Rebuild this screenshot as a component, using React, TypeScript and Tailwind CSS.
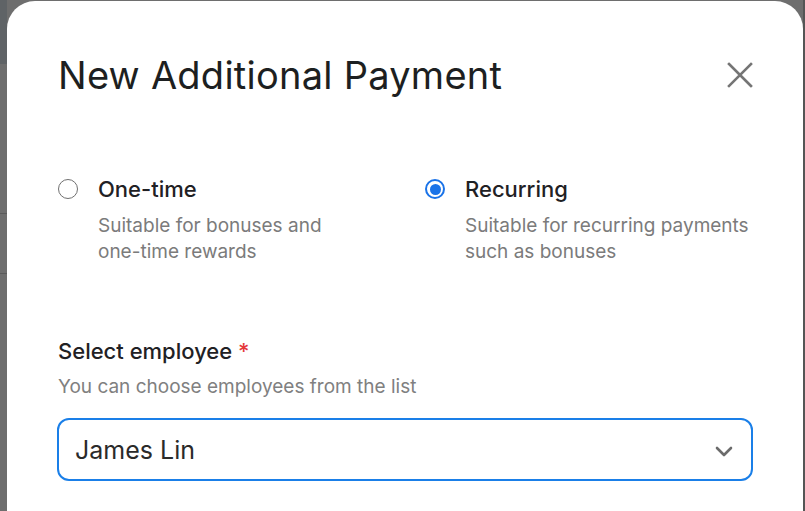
import { useState } from 'react';

type Option = {
  id: string;
  label: string;
  lines: string[];
};

const OPTIONS: Option[] = [
  { id: 'one-time', label: 'One-time', lines: ['Suitable for bonuses and', 'one-time rewards'] },
  { id: 'recurring', label: 'Recurring', lines: ['Suitable for recurring payments', 'such as bonuses'] },
];

function Radio({ checked }: { checked: boolean }) {
  return checked ? (
    <div className="w-[20px] h-[20px] rounded-full border-[2px] border-[#1a73e8] flex items-center justify-center shrink-0">
      <div className="w-[11px] h-[11px] rounded-full bg-[#1a73e8]" />
    </div>
  ) : (
    <div className="w-[20px] h-[20px] rounded-full border-[1.5px] border-[#707070] shrink-0" />
  );
}

export default function App() {
  const [type, setType] = useState('recurring');

  return (
    <div
      className="w-[805px] h-[511px] overflow-hidden bg-[#6e6e6e] flex"
      style={{ fontFamily: 'Inter, "Noto Sans", sans-serif' }}
    >
      {/* dimmed page behind the modal */}
      <div className="w-[7px] shrink-0 flex flex-col">
        <div className="h-[64px] bg-[#5f6366]" />
        <div className="h-[150px] border-b border-[#5a5a5a]" />
        <div className="h-[60px] border-b border-[#5a5a5a]" />
      </div>

      <div className="w-[796px] mt-[1px] bg-white rounded-t-[28px] px-[50px] pt-[52px] shrink-0">
        <div className="flex items-center justify-between pl-[1px]">
          <h2 className="text-[38px] leading-[44px] text-[#1d1f21] tracking-[0.25px]">New Additional Payment</h2>
          <button className="w-[26px] h-[26px] flex items-center justify-center text-[#757575]">
            <svg width="26" height="26" viewBox="0 0 26 26" fill="none" stroke="currentColor" strokeWidth="2.6" strokeLinecap="square">
              <path d="M2 2 L24 24 M24 2 L2 24" />
            </svg>
          </button>
        </div>

        <div className="grid grid-cols-2 gap-x-[39px] mt-[78px] pl-[1px]">
          {OPTIONS.map((opt) => (
            <label key={opt.id} className="flex items-start gap-[20px] cursor-pointer" onClick={() => setType(opt.id)}>
              <div className="mt-[4px]">
                <Radio checked={type === opt.id} />
              </div>
              <div className="flex flex-col">
                <span className="text-[22px] leading-[28px] font-medium text-[#1f2124]">{opt.label}</span>
                <div className="mt-[10px] text-[19px] leading-[26px] text-[#7b7b7b]">
                  {opt.lines.map((l) => (
                    <div key={l}>{l}</div>
                  ))}
                </div>
              </div>
            </label>
          ))}
        </div>

        <div className="mt-[72px]">
          <div className="pl-[1px] text-[22px] leading-[28px] font-medium text-[#1f2124]">
            Select employee <span className="text-[#e5383b]">*</span>
          </div>
          <div className="pl-[1px] mt-[9px] text-[19px] leading-[26px] text-[#808080]">You can choose employees from the list</div>
          <div className="mt-[18px] h-[63px] rounded-[12px] border-[2px] border-[#1a7fe8] flex items-center justify-between pl-[16px] pr-[17px]">
            <span className="text-[25px] text-[#2a2a2a] pt-[2px]">James Lin</span>
            <svg width="20" height="12" viewBox="0 0 20 12" fill="none" stroke="#6b6b6b" strokeWidth="2.6" strokeLinecap="round" strokeLinejoin="round" className="mt-[2px]">
              <path d="M3 3 L10 10 L17 3" />
            </svg>
          </div>
        </div>
      </div>

      <div className="flex-1 bg-[#555]" />
    </div>
  );
}
